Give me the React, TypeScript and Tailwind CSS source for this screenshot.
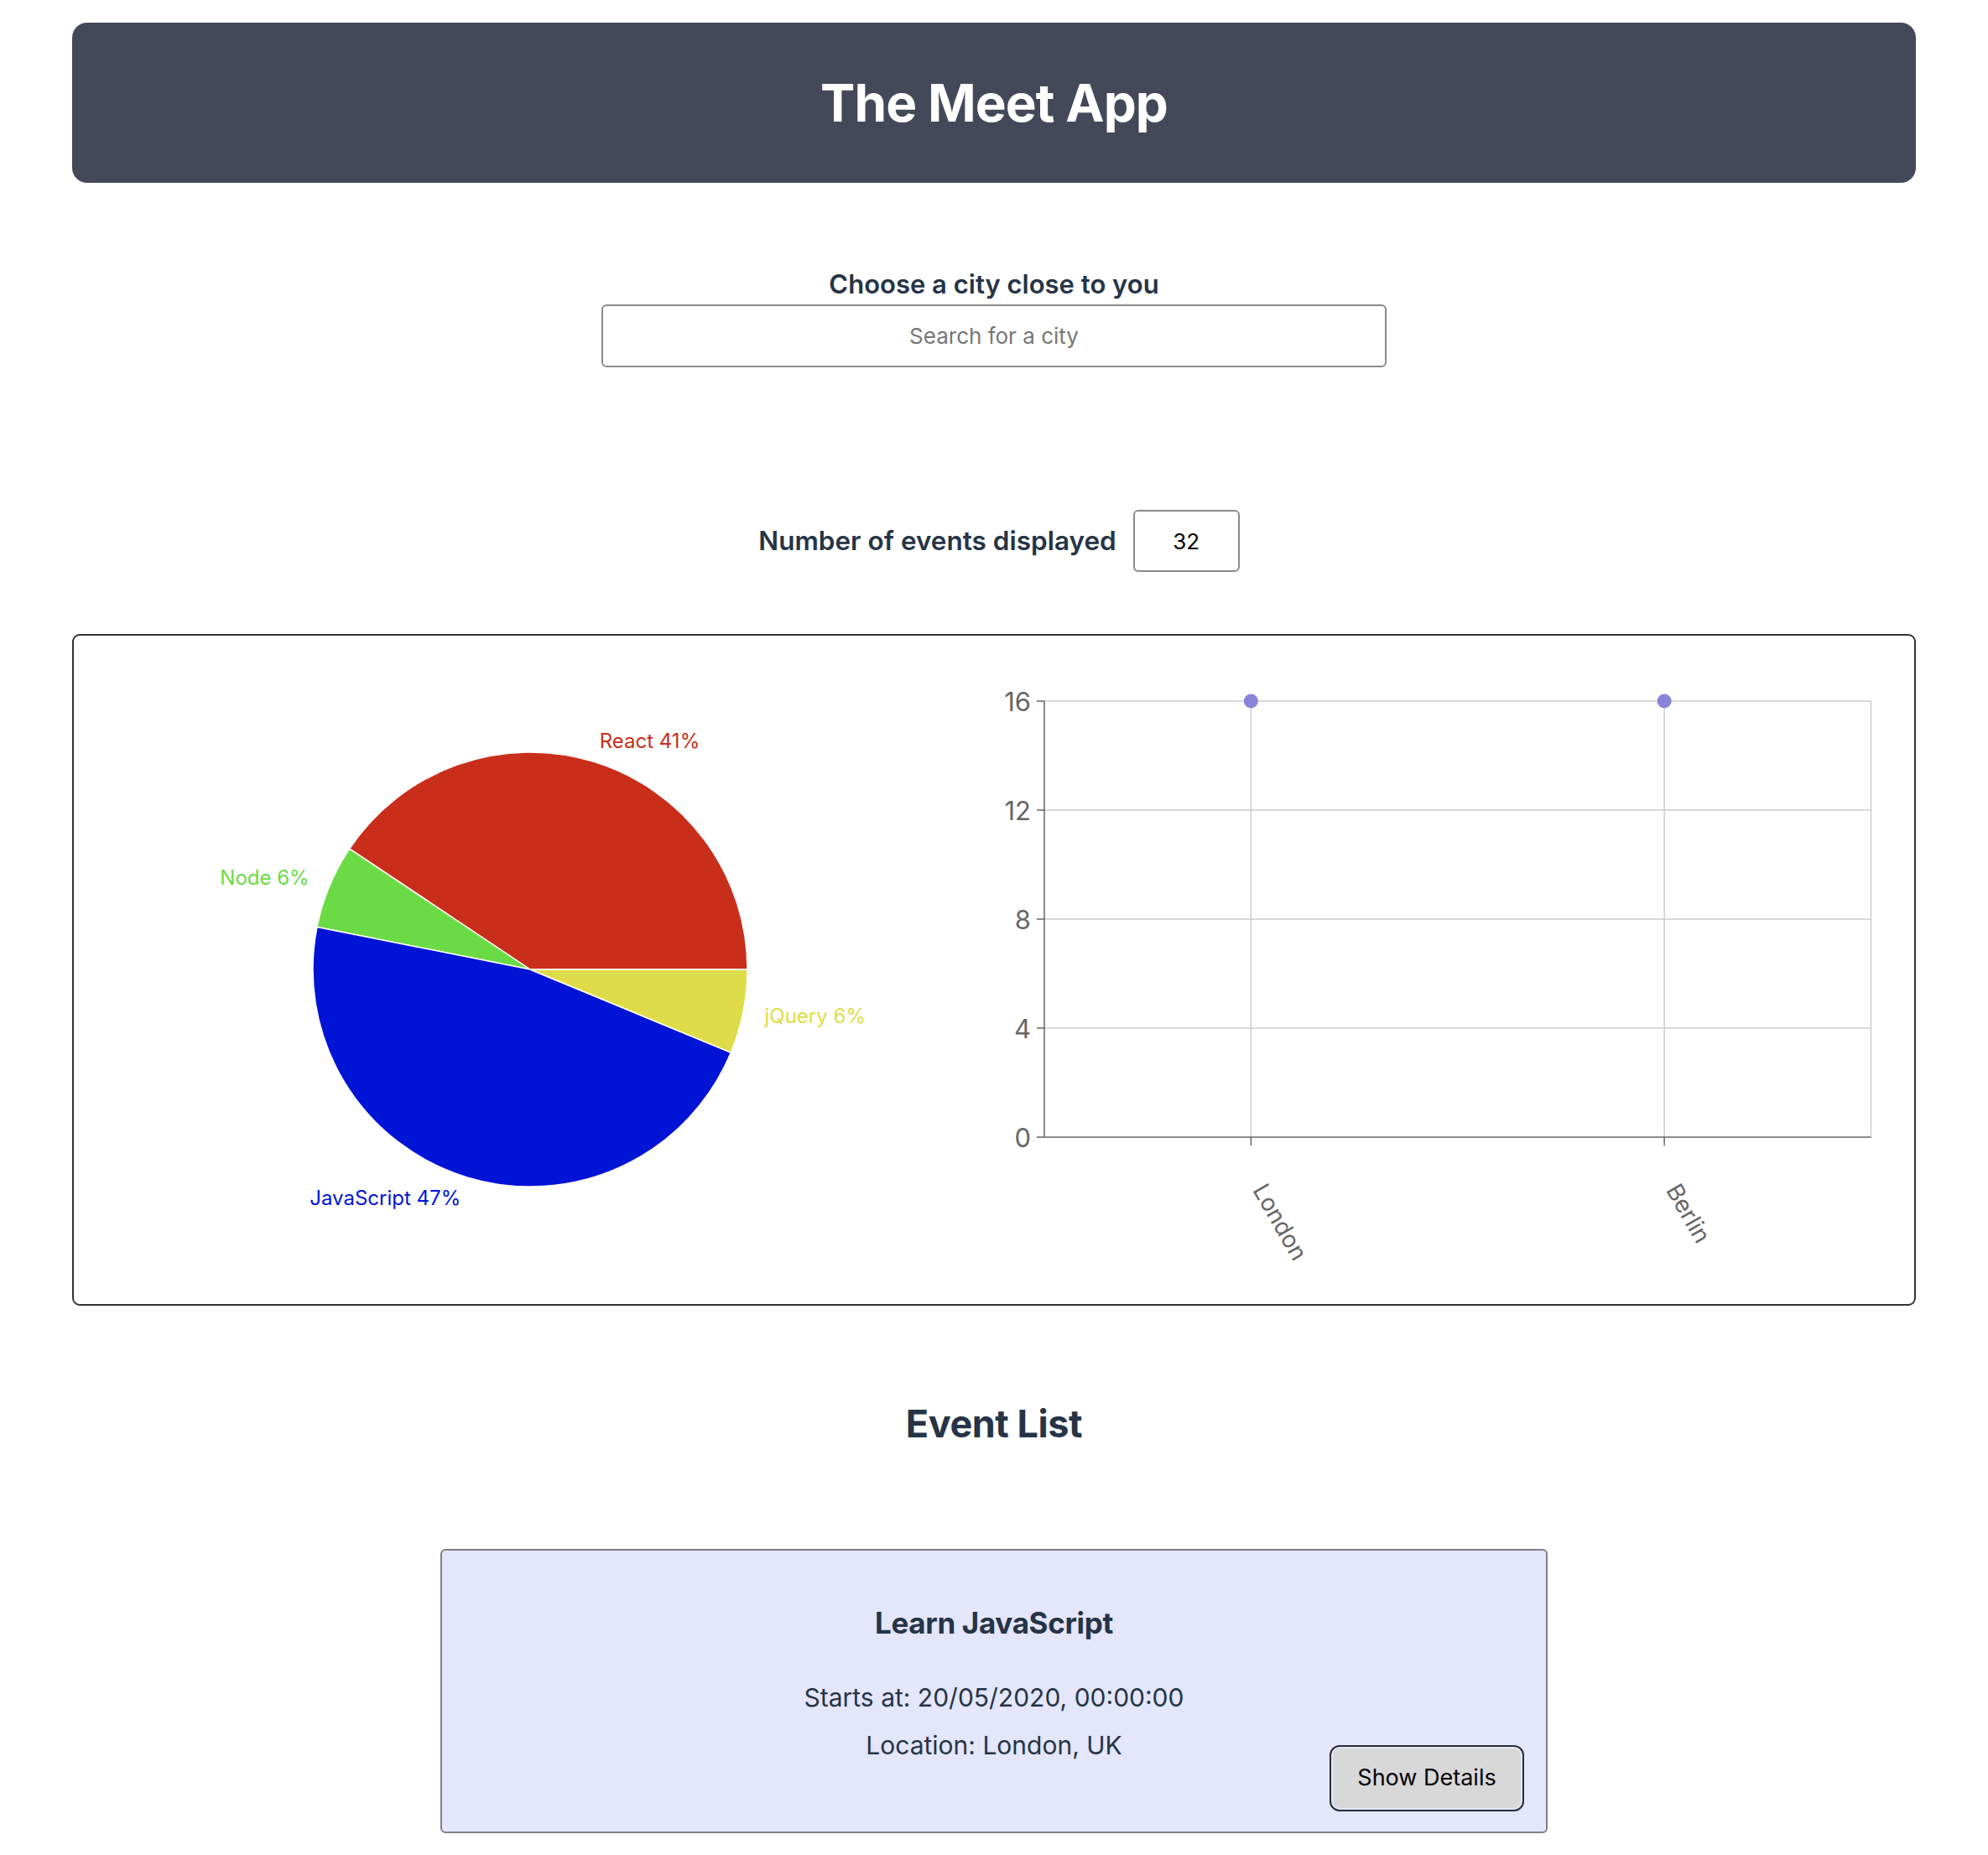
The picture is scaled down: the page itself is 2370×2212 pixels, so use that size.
import React from 'react'

const pieData = [
  { name: 'React', value: 13, color: '#c92e1b' },
  { name: 'Node', value: 2, color: '#6adb45' },
  { name: 'JavaScript', value: 15, color: '#0014d6' },
  { name: 'jQuery', value: 2, color: '#dedc48' },
]

const cities = [
  { city: 'London', count: 16 },
  { city: 'Berlin', count: 16 },
]

const FONT = 'Inter, sans-serif'

function polar(cx: number, cy: number, r: number, deg: number) {
  const rad = (deg * Math.PI) / 180
  return { x: cx + r * Math.cos(rad), y: cy - r * Math.sin(rad) }
}

function GenrePie() {
  const cx = 544
  const cy = 398
  const r = 259
  const total = pieData.reduce((s, d) => s + d.value, 0)
  let angle = 0
  const slices = pieData.map((d) => {
    const start = angle
    const end = angle + (d.value / total) * 360
    angle = end
    const p0 = polar(cx, cy, r, start)
    const p1 = polar(cx, cy, r, end)
    const large = end - start > 180 ? 1 : 0
    const mid = (start + end) / 2
    const lp = polar(cx, cy, r + 26, mid)
    return {
      ...d,
      path: `M ${cx} ${cy} L ${p0.x} ${p0.y} A ${r} ${r} 0 ${large} 0 ${p1.x} ${p1.y} Z`,
      lx: lp.x,
      ly: lp.y,
      anchor: Math.cos((mid * Math.PI) / 180) >= 0 ? 'start' : 'end',
      pct: Math.round((d.value / total) * 100),
    }
  })

  return (
    <svg viewBox="0 0 1097 797" className="w-full h-full">
      {slices.map((s) => (
        <path key={s.name} d={s.path} fill={s.color} stroke="#fff" strokeWidth={1.5} />
      ))}
      {slices.map((s) => (
        <text
          key={s.name + '-label'}
          x={s.lx}
          y={s.ly}
          fill={s.color}
          fontSize={24}
          fontFamily={FONT}
          textAnchor={s.anchor as 'start' | 'end'}
          dominantBaseline="central"
        >
          {s.name} {s.pct}%
        </text>
      ))}
    </svg>
  )
}

function CityScatter() {
  const left = 60
  const right = 1045.5
  const top = 78
  const bottom = 598
  const max = 16
  const yFor = (v: number) => bottom - (v / max) * (bottom - top)
  const band = (right - left) / cities.length
  const xs = cities.map((_, i) => left + band * i + band / 2)
  const ticks = [0, 4, 8, 12, 16]

  return (
    <svg viewBox="0 0 1097 797" className="w-full h-full">
      {/* grid */}
      {ticks.slice(1).map((t) => (
        <line key={'h' + t} x1={left} x2={right} y1={yFor(t)} y2={yFor(t)} stroke="#ccc" strokeWidth={1.5} />
      ))}
      {[...xs, right].map((x) => (
        <line key={'v' + x} x1={x} x2={x} y1={top} y2={bottom} stroke="#ccc" strokeWidth={1.5} />
      ))}
      {/* axes */}
      <line x1={left} x2={left} y1={top} y2={bottom} stroke="#666" strokeWidth={1.5} />
      <line x1={left} x2={right} y1={bottom} y2={bottom} stroke="#666" strokeWidth={1.5} />
      {ticks.map((t) => (
        <g key={'yt' + t}>
          <line x1={left - 9} x2={left} y1={yFor(t)} y2={yFor(t)} stroke="#666" strokeWidth={1.5} />
          <text
            x={left - 16}
            y={yFor(t)}
            fill="#666"
            fontSize={31}
            fontFamily={FONT}
            textAnchor="end"
            dominantBaseline="central"
          >
            {t}
          </text>
        </g>
      ))}
      {cities.map((c, i) => (
        <g key={c.city}>
          <line x1={xs[i]} x2={xs[i]} y1={bottom} y2={bottom + 10} stroke="#666" strokeWidth={1.5} />
          <text
            x={xs[i] + 10}
            y={bottom + 58}
            fill="#666"
            fontSize={28}
            fontFamily={FONT}
            textAnchor="start"
            dominantBaseline="central"
            transform={`rotate(60 ${xs[i] + 10} ${bottom + 58})`}
          >
            {c.city}
          </text>
          <circle cx={xs[i]} cy={yFor(c.count)} r={8.5} fill="#8884d8" />
        </g>
      ))}
    </svg>
  )
}

export default function App() {
  return (
    <div className="min-h-screen bg-white px-[86px] pt-[27px] pb-[26px] font-[Inter,sans-serif] text-[#263446]">
      <header className="h-[191px] rounded-[18px] bg-[#434959] flex items-center justify-center">
        <h1 className="text-[62px] font-bold text-white leading-none tracking-[-0.015em]">The Meet App</h1>
      </header>

      <div className="mt-[102px] flex flex-col items-center">
        <label className="text-[31px] leading-[38px] font-semibold">
          Choose a city close to you
        </label>
        <input
          type="text"
          placeholder="Search for a city"
          className="mt-[5px] w-[936px] h-[75px] rounded-[6px] border-2 border-[#8a8a8a] bg-white text-center text-[26px] text-black placeholder:text-[#767676] outline-none"
        />
      </div>

      <div className="mt-[170px] flex items-center justify-center gap-[20px] pl-[12px]">
        <span className="text-[31.5px] font-semibold">Number of events displayed</span>
        <input
          type="text"
          defaultValue="32"
          className="w-[127px] h-[74px] rounded-[6px] border-2 border-[#8a8a8a] bg-white text-center text-[26px] text-black outline-none"
        />
      </div>

      <div className="mt-[74px] h-[801px] rounded-[9px] border-2 border-[#333] grid grid-cols-2">
        <GenrePie />
        <CityScatter />
      </div>

      <h2 className="mt-[116px] text-center text-[45px] leading-[50px] font-bold tracking-[-0.01em]">Event List</h2>

      <div className="mt-[124px] mx-auto w-[1320px] h-[339px] rounded-[6px] border-2 border-[#877d84] bg-[#e4e6fc] px-[26px] pt-[65px] flex flex-col items-center">
        <h3 className="text-[35px] leading-[42px] font-bold tracking-[-0.01em]">Learn JavaScript</h3>
        <p className="mt-[50px] text-[30px] leading-[36px]">Starts at: 20/05/2020, 00:00:00</p>
        <p className="mt-[21px] text-[30px] leading-[36px]">Location: London, UK</p>
        <div className="-mt-[18px] self-stretch flex justify-end">
          <button className="w-[232px] h-[79px] rounded-[12px] border-2 border-[#2b2b36] bg-[#d9d8d9] shadow-[inset_0_0_0_2px_#e4e6fc] text-[27px] text-black">
            Show Details
          </button>
        </div>
      </div>
    </div>
  )
}
